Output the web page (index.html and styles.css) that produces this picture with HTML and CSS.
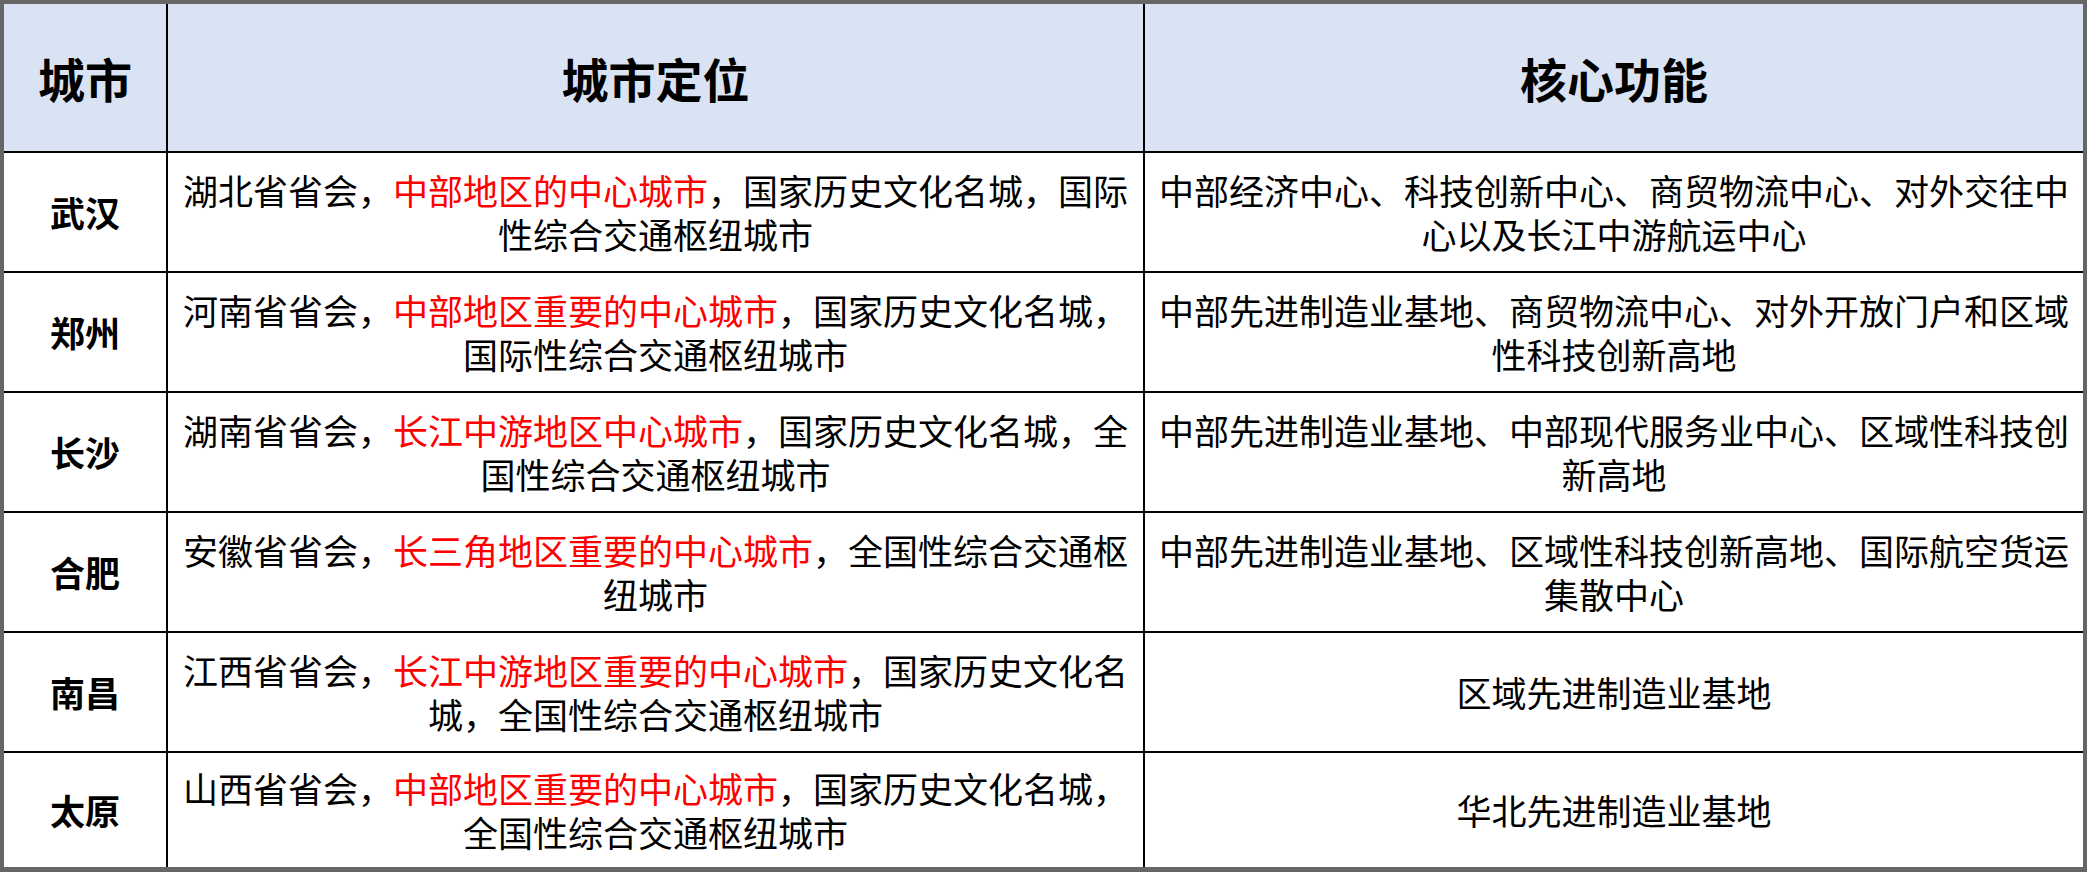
FILE: index.html
```html
<!DOCTYPE html>
<html lang="zh-CN">
<head>
<meta charset="utf-8">
<title>城市定位与核心功能</title>
<link rel="stylesheet" href="styles.css">
</head>
<body>
<div class="grid">
  <div class="cell head c1"><div class="t">城市</div></div>
  <div class="cell head c2"><div class="t">城市定位</div></div>
  <div class="cell head c3"><div class="t">核心功能</div></div>

  <div class="cell city c1"><div class="t">武汉</div></div>
  <div class="cell c2"><div class="t">湖北省省会，<span class="red">中部地区的中心城市</span>，国家历史文化名城，国际性综合交通枢纽城市</div></div>
  <div class="cell c3"><div class="t">中部经济中心、科技创新中心、商贸物流中心、对外交往中心以及长江中游航运中心</div></div>

  <div class="cell city c1"><div class="t">郑州</div></div>
  <div class="cell c2"><div class="t">河南省省会，<span class="red">中部地区重要的中心城市</span>，国家历史文化名城，国际性综合交通枢纽城市</div></div>
  <div class="cell c3"><div class="t">中部先进制造业基地、商贸物流中心、对外开放门户和区域性科技创新高地</div></div>

  <div class="cell city c1"><div class="t">长沙</div></div>
  <div class="cell c2"><div class="t">湖南省省会，<span class="red">长江中游地区中心城市</span>，国家历史文化名城，全国性综合交通枢纽城市</div></div>
  <div class="cell c3"><div class="t">中部先进制造业基地、中部现代服务业中心、区域性科技创新高地</div></div>

  <div class="cell city c1"><div class="t">合肥</div></div>
  <div class="cell c2"><div class="t">安徽省省会，<span class="red">长三角地区重要的中心城市</span>，全国性综合交通枢纽城市</div></div>
  <div class="cell c3"><div class="t">中部先进制造业基地、区域性科技创新高地、国际航空货运集散中心</div></div>

  <div class="cell city c1"><div class="t">南昌</div></div>
  <div class="cell c2"><div class="t">江西省省会，<span class="red">长江中游地区重要的中心城市</span>，国家历史文化名城，全国性综合交通枢纽城市</div></div>
  <div class="cell c3"><div class="t">区域先进制造业基地</div></div>

  <div class="cell city c1 last"><div class="t">太原</div></div>
  <div class="cell c2 last"><div class="t">山西省省会，<span class="red">中部地区重要的中心城市</span>，国家历史文化名城，全国性综合交通枢纽城市</div></div>
  <div class="cell c3 last"><div class="t">华北先进制造业基地</div></div>
</div>
</body>
</html>
```
FILE: styles.css
```css
html {
  background: #666666;
}
body {
  margin: 0;
  padding: 4px 4px 0 4px;
  height: 872px;
  box-sizing: border-box;
  overflow: hidden;
  font-family: "Noto Sans CJK SC", "Noto Sans", sans-serif;
  color: #000;
}
.grid {
  display: grid;
  grid-template-columns: 164px 977px 938px;
  grid-template-rows: 149px repeat(5, 120px) 114px;
  background: #ffffff;
  width: 2079px;
}
.cell {
  box-sizing: border-box;
  display: flex;
  align-items: center;
  justify-content: center;
  text-align: center;
  padding: 0 8px;
  font-size: 35px;
  line-height: 44px;
  border-bottom: 2px solid #000;
  border-right: 2px solid #000;
}
.t {
  width: 100%;
}
.cell.c3 {
  border-right: none;
}
.cell.last {
  border-bottom: none;
}
.head {
  background: #dae3f3;
  font-size: 47px;
  font-weight: 700;
}
.city {
  font-weight: 700;
}
.red {
  color: #ff0000;
}
```
